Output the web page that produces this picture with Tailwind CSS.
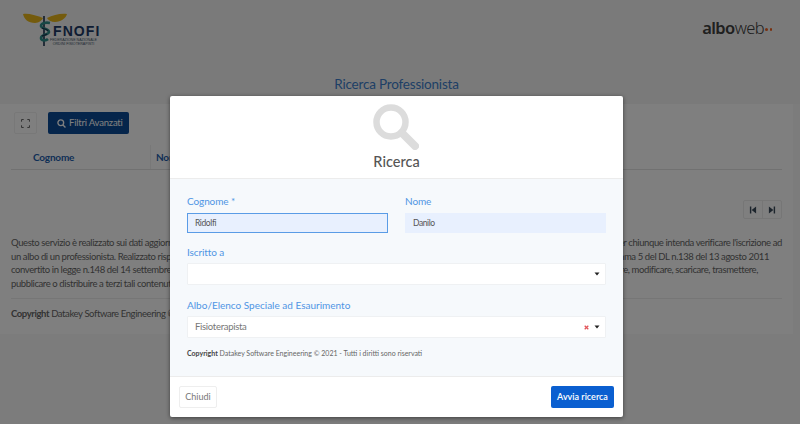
<!DOCTYPE html>
<html lang="it">
<head>
<meta charset="utf-8">
<script src="https://cdn.jsdelivr.net/npm/@tailwindcss/browser@4"></script>
</head>
<body class="relative w-[800px] h-[424px] overflow-hidden bg-[#f8f8f8] font-['Lato','Open_Sans',sans-serif] text-[#4a4a4a]">

<!-- page behind overlay -->
<div class="h-[424px] flex flex-col">
  <header class="h-[104px] shrink-0 bg-[#f5f5f5] relative px-[22px] pt-[12px] flex justify-between">
    <div class="relative w-[84px] h-[36px]">
      <svg class="absolute left-0 top-0" width="84" height="36" viewBox="0 0 84 36">
        <path d="M21 6 C 13 3 6 1 1 2 C 2 7 6 11 13 11 C 17 11 20 8 21 6 Z" fill="#e8b71a"/>
        <path d="M25 6 C 31 3 39 1 45 2 C 44 6 39 10 33 10 C 29 10 26 8 25 6 Z" fill="#e8b71a"/>
        <path d="M22 4 L22 34" stroke="#1e3350" stroke-width="1.6"/>
        <path d="M28 11 C 24 10 19 11 19 14 C 19 17 27 16 27 20 C 27 23 19 22 19 26 C 19 29 24 29 26 27" fill="none" stroke="#2f8f8a" stroke-width="2.6"/>
        <path d="M20 16 C 22 17 25 17 26 19 M20 24 C 22 23 24 23 25 22" fill="none" stroke="#1e3350" stroke-width="1.2"/>
      </svg>
      <div class="absolute left-[31px] top-[14px] leading-[10px] text-[14px] font-bold text-[#1c3a66] font-['Liberation_Sans',sans-serif] tracking-[1.1px]">FNOFI</div>
      <div class="absolute left-[28px] top-[26px] text-[3.6px] leading-[4px] text-[#44546a] text-center font-['Liberation_Sans',sans-serif] whitespace-nowrap">FEDERAZIONE NAZIONALE<br>ORDINI FISIOTERAPISTI</div>
    </div>
    <div class="pt-[3px] pr-[6px] text-[16.5px] leading-[24px] text-[#404040] font-['Noto_Sans',sans-serif] tracking-[-0.6px] flex items-center h-[29px]">
      <span class="font-semibold">albo</span><span class="font-light">web</span>
      <span class="ml-[1px] flex gap-[2px] mt-[3px]"><span class="w-[2.5px] h-[2.5px] rounded-full bg-[#f0601f]"></span><span class="w-[2.5px] h-[2.5px] rounded-full bg-[#f0601f]"></span></span>
    </div>
    <h1 class="absolute left-0 right-0 top-[74px] text-center text-[13.5px] leading-[20px] tracking-[-0.2px] text-[#3d7fcc] mr-[7px]">Ricerca Professionista</h1>
  </header>

  <main class="mr-[7px] bg-[#ffffff] px-[11px] h-[230px] shrink-0 text-[#666666] tracking-[-0.4px]">
    <div class="flex gap-[11px] pt-[8px] pl-[3px]">
      <div class="w-[23px] h-[22px] border border-[#f0f0f0] rounded-[2px] flex items-center justify-center">
        <svg width="9" height="9" viewBox="0 0 10 10" fill="none" stroke="#555" stroke-width="1"><path d="M0.6 3V0.6H3M7 0.6H9.4V3M9.4 7V9.4H7M3 9.4H0.6V7"/></svg>
      </div>
      <div class="w-[81px] h-[22px] bg-[#0a4a96] rounded-[2px] flex items-center pl-[9px] gap-[3px] text-white text-[9.5px] tracking-[-0.2px] whitespace-nowrap">
        <svg width="9" height="9" viewBox="0 0 10 10" fill="none" stroke="#fff" stroke-width="1.5"><circle cx="4.2" cy="4.2" r="3.2"/><path d="M6.6 6.6L9.4 9.4"/></svg>
        <span>Filtri Avanzati</span>
      </div>
    </div>
    <div class="mt-[11px] h-[25px] border-b border-[#e3e3e3] flex text-[10px] font-bold text-[#1f5fae] leading-[24px] tracking-[-0.2px]">
      <div class="w-[140px] pl-[22px] border-r border-[#f0f0f0] h-[24px]">Cognome</div>
      <div class="pl-[5px]">Nome</div>
    </div>
    <div class="mt-[30px] h-[19px] flex justify-end">
      <div class="flex w-[39px] h-[19px] border border-[#ededed] rounded-[2px]">
        <div class="flex-1 border-r border-[#ededed] flex items-center justify-center"><svg width="8" height="8" viewBox="0 0 9 9" fill="#3a4a5a"><path d="M1 0.5H2.6V8.5H1ZM8 0.5V8.5L3 4.5Z"/></svg></div>
        <div class="flex-1 flex items-center justify-center"><svg width="8" height="8" viewBox="0 0 9 9" fill="#3a4a5a"><path d="M1 0.5V8.5L6 4.5ZM6.4 0.5H8V8.5H6.4Z"/></svg></div>
      </div>
    </div>
    <div class="mt-[17px] text-[9.5px] leading-[13.6px]">
      <div class="flex justify-between whitespace-nowrap"><span>Questo servizio è realizzato sui dati aggiornati</span><span>per chiunque intenda verificare l'iscrizione ad</span></div>
      <div class="flex justify-between whitespace-nowrap pr-[13px]"><span>un albo di un professionista. Realizzato rispetto</span><span>comma 5 del DL n.138 del 13 agosto 2011</span></div>
      <div class="flex justify-between whitespace-nowrap pr-[24px]"><span>convertito in legge n.148 del 14 settembre 2011</span><span>copiare, modificare, scaricare, trasmettere,</span></div>
      <div class="whitespace-nowrap">pubblicare o distribuire a terzi tali contenuti</div>
    </div>
    <div class="mt-[8px] border-t border-[#ececec] pt-[8px] text-[9.5px] leading-[14px]"><b class="font-bold">Copyright</b> Datakey Software Engineering ©</div>
  </main>
</div>

<!-- overlay -->
<div class="absolute inset-0 bg-black/50"></div>

<!-- modal -->
<div class="absolute left-[170px] top-[96px] w-[453px] h-[321px] bg-white rounded-[2px] shadow-[0_1px_4px_rgba(0,0,0,0.5)] flex flex-col overflow-hidden">
  <div class="h-[83px] shrink-0 border-b border-[#ececec] flex flex-col items-center">
    <svg class="mt-[8px] mr-[2px]" width="46" height="46" viewBox="0 0 46 46" fill="none" stroke="#dcdcdc"><circle cx="18" cy="18" r="14.5" stroke-width="6.5"/><path d="M29 29L42 42" stroke-width="8" stroke-linecap="round"/></svg>
    <div class="mt-[2px] text-[14.5px] leading-[20px] font-medium text-[#555555]">Ricerca</div>
  </div>
  <div class="flex-1 bg-[#f6f9fc] px-[17px] pt-[15px] border-b border-[#ececec]">
    <div class="flex gap-[17px]">
      <div class="w-[201px]">
        <label class="block text-[10px] leading-[15px] text-[#4f95e4] tracking-[-0.1px]">Cognome *</label>
        <div class="mt-[4px] h-[20px] bg-[#e8f0fe] border border-[#5a9ce6] flex items-center pl-[7px] text-[8.5px] tracking-[-0.4px] text-[#555]">Ridolfi</div>
      </div>
      <div class="w-[201px]">
        <label class="block text-[10px] leading-[15px] text-[#4f95e4] tracking-[-0.1px]">Nome</label>
        <div class="mt-[4px] h-[20px] bg-[#e8f0fe] flex items-center pl-[8px] text-[8.5px] tracking-[-0.4px] text-[#555]">Danilo</div>
      </div>
    </div>
    <label class="block mt-[12px] text-[10px] leading-[15px] text-[#4f95e4] tracking-[-0.1px]">Iscritto a</label>
    <div class="mt-[3px] w-[419px] h-[22px] bg-white border border-[#eff1f3] rounded-[1px] flex items-center justify-end pr-[5px]">
      <svg width="6" height="4" viewBox="0 0 6 4" fill="#222"><path d="M0.5 0.5H5.5L3 3.5Z"/></svg>
    </div>
    <label class="block mt-[13px] text-[10px] leading-[15px] text-[#4f95e4]">Albo/Elenco Speciale ad Esaurimento</label>
    <div class="mt-[3px] w-[419px] h-[22px] bg-white border border-[#eff1f3] rounded-[1px] flex items-center pl-[7px] pr-[5px] text-[9.5px] tracking-[-0.3px] text-[#777]">
      <span class="flex-1">Fisioterapista</span>
      <svg class="mr-[5px]" width="5" height="5" viewBox="0 0 5 5" stroke="#e2555a" stroke-width="1.3"><path d="M0.7 0.7L4.3 4.3M4.3 0.7L0.7 4.3"/></svg>
      <svg width="6" height="4" viewBox="0 0 6 4" fill="#222"><path d="M0.5 0.5H5.5L3 3.5Z"/></svg>
    </div>
    <p class="mt-[9px] text-[7px] leading-[12px] text-[#666]"><b class="font-bold text-[#444]">Copyright</b> Datakey Software Engineering © 2021 - Tutti i diritti sono riservati</p>
  </div>
  <div class="h-[40px] shrink-0 flex items-center justify-between pl-[9px] pr-[9px]">
    <div class="w-[38px] h-[22px] border border-[#eeeeee] rounded-[2px] flex items-center justify-center text-[9px] text-[#777]">Chiudi</div>
    <div class="w-[63px] h-[22px] bg-[#0a5fd0] rounded-[2px] flex items-center justify-center text-[9px] text-white font-semibold">Avvia ricerca</div>
  </div>
</div>
</body>
</html>
